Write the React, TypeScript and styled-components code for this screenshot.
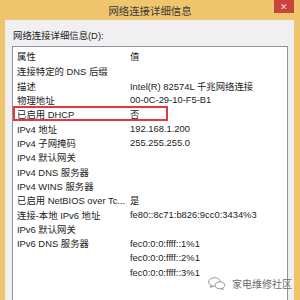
import React from "react";
import styled, { createGlobalStyle } from "styled-components";

const GlobalStyle = createGlobalStyle`
  html, body {
    margin: 0;
    padding: 0;
    background: #efc56d;
  }
`;

const rows: { name: string; value: string[]; mark?: boolean }[] = [
  { name: "连接特定的 DNS 后缀", value: [""] },
  { name: "描述", value: ["Intel(R) 82574L 千兆网络连接"] },
  { name: "物理地址", value: ["00-0C-29-10-F5-B1"] },
  { name: "已启用 DHCP", value: ["否"], mark: true },
  { name: "IPv4 地址", value: ["192.168.1.200"] },
  { name: "IPv4 子网掩码", value: ["255.255.255.0"] },
  { name: "IPv4 默认网关", value: [""] },
  { name: "IPv4 DNS 服务器", value: [""] },
  { name: "IPv4 WINS 服务器", value: [""] },
  { name: "已启用 NetBIOS over Tc...", value: ["是"] },
  { name: "连接-本地 IPv6 地址", value: ["fe80::8c71:b826:9cc0:3434%3"] },
  { name: "IPv6 默认网关", value: [""] },
  {
    name: "IPv6 DNS 服务器",
    value: ["fec0:0:0:ffff::1%1", "fec0:0:0:ffff::2%1", "fec0:0:0:ffff::3%1"],
  },
];

const Window = styled.div`
  width: 300px;
  height: 300px;
  overflow: hidden;
  display: flex;
  flex-direction: column;
  background: #efc56d;
  font-family: "Liberation Sans", "Noto Sans CJK SC", sans-serif;
  color: #1c1c1c;
  position: relative;
`;

const TitleBar = styled.div`
  height: 20px;
  flex: none;
  display: flex;
  align-items: center;
  justify-content: center;
  position: relative;
  font-size: 10.4px;
  color: #3a3a3a;
`;

const CloseButton = styled.div`
  position: absolute;
  top: 0;
  right: 6px;
  width: 20px;
  height: 13px;
  background: #c9423d;
  color: #f6dede;
  font-size: 9px;
  display: flex;
  align-items: center;
  justify-content: center;
`;

const Frame = styled.div`
  flex: 1;
  display: flex;
  padding: 0 6px 0 5px;
  min-height: 0;
`;

const Panel = styled.div`
  flex: 1;
  background: #f0f0f0;
  padding: 10px 6px 0 7px;
  display: flex;
  flex-direction: column;
  gap: 4px;
  min-height: 0;
`;

const Label = styled.div`
  font-size: 9.4px;
  line-height: 12px;
  padding-left: 1px;
`;

const ListBox = styled.div`
  flex: 1;
  background: #fff;
  border: 1px solid #8d93a3;
  border-bottom: none;
  min-height: 0;
  overflow: hidden;
`;

const HeaderRow = styled.div`
  display: grid;
  grid-template-columns: 113px 1fr;
  height: 17px;
  align-items: center;
  font-size: 9.4px;
  padding-left: 4px;
  color: #222;
`;

const Row = styled.div<{ $mark?: boolean }>`
  display: grid;
  grid-template-columns: 113px 1fr;
  height: 14.36px;
  align-items: center;
  font-size: 9.4px;
  padding-left: 4px;
  white-space: nowrap;
  position: relative;

  &::after {
    content: "";
    display: ${(p) => (p.$mark ? "block" : "none")};
    position: absolute;
    left: 0;
    top: -1px;
    width: 155px;
    height: 15px;
    border: 2px solid #e03a40;
    box-sizing: border-box;
  }
`;

const Cell = styled.span`
  overflow: hidden;
`;

const Watermark = styled.div`
  position: absolute;
  right: 8px;
  bottom: 9px;
  display: flex;
  align-items: center;
  gap: 6px;
  font-size: 10px;
  color: #6c6c6c;
`;

const App = () => {
  return (
    <Window>
      <GlobalStyle />
      <TitleBar>
        网络连接详细信息
        <CloseButton>✕</CloseButton>
      </TitleBar>
      <Frame>
        <Panel>
          <Label>网络连接详细信息(D):</Label>
          <ListBox>
            <HeaderRow>
              <Cell>属性</Cell>
              <Cell>值</Cell>
            </HeaderRow>
            {rows.map((r) =>
              r.value.map((v, i) => (
                <Row key={r.name + i} $mark={r.mark}>
                  <Cell>{i === 0 ? r.name : ""}</Cell>
                  <Cell>{v}</Cell>
                </Row>
              ))
            )}
          </ListBox>
        </Panel>
      </Frame>
      <Watermark>
        <svg width="18" height="13" viewBox="0 0 18 13" fill="none" stroke="#8a8a8a" strokeWidth="0.9">
          <ellipse cx="6.5" cy="5" rx="5.8" ry="4.3" />
          <path d="M3 8.6 L2.4 10.6 L5 9.2" />
          <ellipse cx="11.8" cy="8.3" rx="4.8" ry="3.5" fill="#fff" />
          <path d="M14.6 11.2 L15.3 12.6 L13.2 11.7" />
        </svg>
        家电维修社区
      </Watermark>
    </Window>
  );
};

export default App;
